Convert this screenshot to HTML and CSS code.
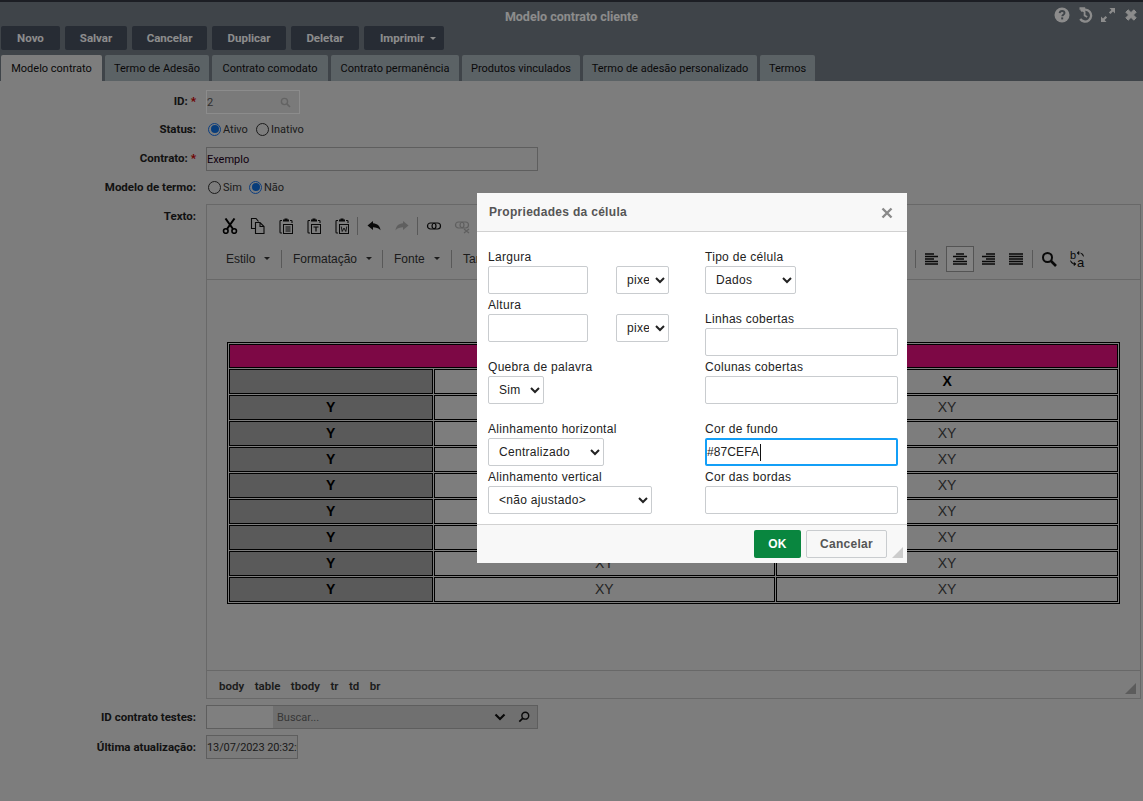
FILE: index.html
```html
<!DOCTYPE html>
<html lang="pt">
<head>
<meta charset="utf-8">
<title>Modelo contrato cliente</title>
<link rel="stylesheet" href="styles.css">
</head>
<body>
<div class="page">
  <header class="head">
    <div class="title-bar">
      <span class="title">Modelo contrato cliente</span>
      <div class="win-icons">
        <svg viewBox="0 0 16 16" class="wi"><circle cx="8" cy="8" r="7.5" fill="currentColor"/><path d="M5.600 6.200c.2-1.500 1.200-2.200 2.500-2.200 1.400 0 2.400.8 2.400 2 0 1.700-2.200 1.700-2.200 3.200" fill="none" stroke="#737d85" stroke-width="1.900"/><rect x="7.200" y="10.400" width="2" height="2" fill="#737d85"/></svg>
        <svg viewBox="0 0 16 16" class="wi"><path d="M2.500 1.500H7V5M4 4.200A6 6 0 1 1 3.200 12" fill="none" stroke="currentColor" stroke-width="2.300"/><path d="M7.600 4.600v3.800l2.600 1.600" fill="none" stroke="currentColor" stroke-width="1.800"/></svg>
        <svg viewBox="0 0 16 16" class="wi"><path d="M9.500 1H15v5.500l-2-2-2.500 2.500-1.600-1.600L11.400 3zM6.500 15H1V9.500l2 2 2.500-2.500 1.600 1.600L4.600 13z" fill="currentColor"/></svg>
        <svg viewBox="0 0 16 16" class="wi"><path d="M2.800 5.200 5.200 2.800 8 5.600l2.800-2.800 2.400 2.400L10.400 8l2.800 2.800-2.400 2.400L8 10.400l-2.800 2.800-2.400-2.400L5.600 8z" fill="currentColor" stroke="currentColor"/></svg>
      </div>
    </div>
    <div class="actions">
      <button class="act w-novo">Novo</button>
      <button class="act w-salvar">Salvar</button>
      <button class="act w-cancelar">Cancelar</button>
      <button class="act w-duplicar">Duplicar</button>
      <button class="act w-deletar">Deletar</button>
      <button class="act w-imprimir">Imprimir <i class="caret"></i></button>
    </div>
    <nav class="tabs">
      <span class="tab active t1">Modelo contrato</span>
      <span class="tab t2">Termo de Adesão</span>
      <span class="tab t3">Contrato comodato</span>
      <span class="tab t4">Contrato permanência</span>
      <span class="tab t5">Produtos vinculados</span>
      <span class="tab t6">Termo de adesão personalizado</span>
      <span class="tab t7">Termos</span>
    </nav>
  </header>

  <main class="form">
    <div class="row r-id">
      <label class="lbl">ID: <b class="req">*</b></label>
      <div class="inp inp-id"><span>2</span>
        <svg viewBox="0 0 16 16" class="search-sm"><circle cx="6.500" cy="6.500" r="4.500" fill="none" stroke="currentColor" stroke-width="2"/><path d="m10 10 4.500 4.500" stroke="currentColor" stroke-width="2.400"/></svg>
      </div>
    </div>
    <div class="row r-status">
      <label class="lbl">Status:</label>
      <div class="radios"><i class="radio on"></i><span class="opt-a">Ativo</span><i class="radio"></i><span>Inativo</span></div>
    </div>
    <div class="row r-contrato">
      <label class="lbl">Contrato: <b class="req">*</b></label>
      <div class="inp inp-contrato"><span>Exemplo</span></div>
    </div>
    <div class="row r-termo">
      <label class="lbl">Modelo de termo:</label>
      <div class="radios"><i class="radio"></i><span class="opt-s">Sim</span><i class="radio on"></i><span>Não</span></div>
    </div>
    <div class="row r-texto">
      <label class="lbl lbl-top">Texto:</label>
      <div class="editor">
        <div class="toolbar">
          <div class="tb-row tb-1">
            <svg class="ic" viewBox="0 0 16 16"><path d="M3.500 0.500l7.500 10.500M12.500 0.500 5 11" stroke="#000" stroke-width="2" fill="none"/><circle cx="3.800" cy="13" r="2.300" fill="none" stroke="#000" stroke-width="1.600"/><circle cx="12.200" cy="13" r="2.300" fill="none" stroke="#000" stroke-width="1.600"/></svg>
            <svg class="ic" viewBox="0 0 16 16"><path d="M5.500 10.500h-4v-10h4.500l2.500 3M5.500 4.500h4.500l4 4v7h-8.500zM10 4.500v4h4" fill="none" stroke="#111" stroke-width="1.100"/></svg>
            <svg class="ic" viewBox="0 0 16 16"><path d="M4 2.500H2.800q-.8 0-.8.800v10.900q0 .8.800.8H4M12 2.500h1.200q.8 0 .8.800V5" fill="none" stroke="#111" stroke-width="1.100"/><path d="M5 3.500V1.500h1.500V.5h3v1H11v2z" fill="#111"/><rect x="5.500" y="6.500" width="9" height="9" fill="none" stroke="#111"/><path d="M7.500 9h5M7.500 11h5M7.500 13h5" stroke="#111"/></svg>
            <svg class="ic" viewBox="0 0 16 16"><path d="M4 2.500H2.800q-.8 0-.8.800v10.900q0 .8.800.8H4M12 2.500h1.200q.8 0 .8.800V5" fill="none" stroke="#111" stroke-width="1.100"/><path d="M5 3.500V1.500h1.500V.5h3v1H11v2z" fill="#111"/><rect x="5.500" y="6.500" width="9" height="9" fill="none" stroke="#111"/><path d="M7.500 9h5M10 9v4.500" stroke="#111" stroke-width="1.200"/></svg>
            <svg class="ic" viewBox="0 0 16 16"><path d="M4 2.500H2.800q-.8 0-.8.800v10.900q0 .8.800.8H4M12 2.500h1.200q.8 0 .8.800V5" fill="none" stroke="#111" stroke-width="1.100"/><path d="M5 3.500V1.500h1.500V.5h3v1H11v2z" fill="#111"/><rect x="5.500" y="6.500" width="9" height="9" fill="none" stroke="#111"/><path d="M7.200 8.500l1 5 1.800-3.500 1.800 3.500 1-5" stroke="#111" stroke-width=".9" fill="none"/></svg>
            <i class="sep"></i>
            <svg class="ic" viewBox="0 0 16 16"><path d="M7 3 1.500 7.500 7 12V9.200c3 0 5.500.7 7.500 3-.5-4-3-6.700-7.500-7z" fill="#111"/></svg>
            <svg class="ic dim" viewBox="0 0 16 16"><path d="M9 3l5.500 4.500L9 12V9.200c-3 0-5.500.7-7.500 3 .5-4 3-6.700 7.500-7z" fill="#111"/></svg>
            <i class="sep"></i>
            <svg class="ic" viewBox="0 0 16 16"><rect x="1.500" y="5" width="8.500" height="6" rx="3" fill="none" stroke="#111" stroke-width="1.200"/><rect x="6" y="5" width="8.500" height="6" rx="3" fill="none" stroke="#111" stroke-width="1.200"/></svg>
            <svg class="ic dim" viewBox="0 0 16 16"><rect x="1.500" y="4" width="8.500" height="6" rx="3" fill="none" stroke="#111" stroke-width="1.200"/><rect x="6" y="4" width="8.500" height="6" rx="3" fill="none" stroke="#111" stroke-width="1.200"/><path d="m10 11 5 4m0-4-5 4" stroke="#111" stroke-width="1.300"/></svg>
          </div>
          <div class="tb-row tb-2">
            <span class="combo c-estilo">Estilo<i class="mini-caret"></i></span><i class="sep"></i>
            <span class="combo c-format">Formatação<i class="mini-caret"></i></span><i class="sep"></i>
            <span class="combo c-fonte">Fonte<i class="mini-caret"></i></span><i class="sep"></i>
            <span class="combo c-tam">Tamanho<i class="mini-caret"></i></span>
            <i class="sep sep-right"></i>
            <svg class="ic al al-first" viewBox="0 0 14 12"><path d="M0 1h9M0 3.500h13M0 6h9M0 8.500h13M0 11h13" stroke="#111" stroke-width="1.300"/></svg>
            <span class="al-active"><svg class="ic al" viewBox="0 0 14 12"><path d="M3 1h8M0 3.500h14M3 6h8M0 8.500h14M0 11h14" stroke="#111" stroke-width="1.300"/></svg></span>
            <svg class="ic al" viewBox="0 0 14 12"><path d="M5 1h9M1 3.500h13M5 6h9M1 8.500h13M1 11h13" stroke="#111" stroke-width="1.300"/></svg>
            <svg class="ic al al-last" viewBox="0 0 14 12"><path d="M0 1h14M0 3.500h14M0 6h14M0 8.500h14M0 11h14" stroke="#111" stroke-width="1.300"/></svg>
            <i class="sep sep-find"></i>
            <svg class="ic ic-find" viewBox="0 0 16 16"><circle cx="6.500" cy="6.500" r="4.500" fill="none" stroke="#111" stroke-width="2"/><path d="m10 10 5 5" stroke="#111" stroke-width="2.600"/></svg>
            <svg class="ic ic-rep" viewBox="0 0 18 18"><text x="1" y="9" class="rep-b">b</text><text x="8" y="17" class="rep-a">a</text><path d="M14.500 6.500q0-3-3-3.500M8 3l2-1.500V4.500zM1.500 10.500q.3 3 3.500 3.500M7 14l-2-1.500v3z" fill="#111" stroke="#111" stroke-width=".7"/></svg>
          </div>
        </div>
        <div class="content">
          <table class="sheet">
            <colgroup><col class="col-y"><col><col></colgroup>
            <tr class="tr-top"><td colspan="3" class="magenta">&nbsp;</td></tr>
            <tr><td class="gray">&nbsp;</td><td class="b">X</td><td class="b">X</td></tr>
            <tr><td class="gray b">Y</td><td>XY</td><td>XY</td></tr>
            <tr><td class="gray b">Y</td><td>XY</td><td>XY</td></tr>
            <tr><td class="gray b">Y</td><td>XY</td><td>XY</td></tr>
            <tr><td class="gray b">Y</td><td>XY</td><td>XY</td></tr>
            <tr><td class="gray b">Y</td><td>XY</td><td>XY</td></tr>
            <tr><td class="gray b">Y</td><td>XY</td><td>XY</td></tr>
            <tr><td class="gray b">Y</td><td>XY</td><td>XY</td></tr>
            <tr><td class="gray b">Y</td><td>XY</td><td>XY</td></tr>
          </table>
        </div>
        <div class="path">
          <span>body</span><span>table</span><span>tbody</span><span>tr</span><span>td</span><span>br</span>
          <i class="grip"></i>
        </div>
      </div>
    </div>
    <div class="row r-test">
      <label class="lbl">ID contrato testes:</label>
      <div class="inp inp-test">
        <span class="test-id"></span>
        <span class="test-ph">Buscar...</span>
        <svg viewBox="0 0 12 12" class="chev"><path d="M1.500 3.500 6 8l4.500-4.500" fill="none" stroke="currentColor" stroke-width="2.200"/></svg>
        <svg viewBox="0 0 14 14" class="lens"><circle cx="8.500" cy="5.500" r="4" fill="none" stroke="currentColor" stroke-width="1.700"/><path d="M5.500 8.500 1.500 12.500" stroke="currentColor" stroke-width="2"/></svg>
      </div>
    </div>
    <div class="row r-update">
      <label class="lbl">Última atualização:</label>
      <div class="inp inp-date"><span>13/07/2023 20:32:05</span></div>
    </div>
  </main>
</div>

<div class="overlay"></div>

<section class="dialog">
  <div class="dlg-head">
    <span class="dlg-title">Propriedades da célula</span>
    <svg viewBox="0 0 12 12" class="dlg-x"><path d="M1.500 1.500l9 9m0-9-9 9" stroke="currentColor" stroke-width="2.400"/></svg>
  </div>
  <div class="dlg-body">
    <div class="col col-l">
      <div class="field"><label>Largura</label>
        <div class="pair"><input class="ctl w100"><select class="ctl w53"><option>pixels</option></select></div>
      </div>
      <div class="field"><label>Altura</label>
        <div class="pair"><input class="ctl w100"><select class="ctl w53"><option>pixels</option></select></div>
      </div>
      <div class="field gap"><label>Quebra de palavra</label>
        <select class="ctl w56"><option>Sim</option></select>
      </div>
      <div class="field gap"><label>Alinhamento horizontal</label>
        <select class="ctl w116"><option>Centralizado</option></select>
      </div>
      <div class="field"><label>Alinhamento vertical</label>
        <select class="ctl w164"><option>&lt;não ajustado&gt;</option></select>
      </div>
    </div>
    <div class="col col-r">
      <div class="field"><label>Tipo de célula</label>
        <select class="ctl w91"><option>Dados</option></select>
      </div>
      <div class="field gap"><label>Linhas cobertas</label><input class="ctl wfull"></div>
      <div class="field"><label>Colunas cobertas</label><input class="ctl wfull"></div>
      <div class="field gap"><label>Cor de fundo</label><div class="ctl wfull focus">#87CEFA<i class="cursor"></i></div></div>
      <div class="field"><label>Cor das bordas</label><input class="ctl wfull"></div>
    </div>
  </div>
  <div class="dlg-foot">
    <button class="btn-ok">OK</button>
    <button class="btn-cancel">Cancelar</button>
    <i class="dlg-grip"></i>
  </div>
</section>
</body>
</html>
```

FILE: styles.css
```css
* { box-sizing: border-box; }
html, body { margin: 0; height: 100%; }
body { position: relative; width: 1143px; height: 801px; overflow: hidden; background: #e3e3e3; font-family: Roboto, "Liberation Sans", sans-serif; font-size: 11px; color: #111; }

.page { display: flex; flex-direction: column; height: 801px; }
.head { background: #737d85; border-top: 2px solid #333842; height: 81px; flex: none; position: relative; }
.title-bar { height: 24px; display: flex; justify-content: center; align-items: center; position: relative; padding-top: 5px; }
.title { font-weight: 700; font-size: 12.500px; color: #fff; }
.win-icons { position: absolute; right: 4px; top: 5px; display: flex; gap: 7px; color: #fff; }
.wi { width: 16px; height: 16px; display: block; }

.actions { display: flex; gap: 5px; padding-left: 1px; }
.act { height: 24px; border: 0; border-radius: 2px; background: #475060; color: #fff; font: 700 11.500px Roboto, sans-serif; padding: 0; }
.w-novo { width: 59px; } .w-salvar { width: 62px; } .w-cancelar { width: 75px; } .w-duplicar { width: 74px; } .w-deletar { width: 68px; } .w-imprimir { width: 80px; padding-left: 8px; }
.caret { display: inline-block; border: 3.500px solid transparent; border-top-color: #fff; border-bottom: 0; vertical-align: 2px; margin-left: 3px; }

.tabs { display: flex; position: absolute; left: 1px; top: 53px; height: 26px; }
.tab { height: 26px; background: #a7b2b9; color: #111; border-radius: 2px 2px 0 0; display: flex; align-items: center; justify-content: center; font-size: 11px; margin-right: 3px; }
.tab.active { background: #e3e3e3; }
.t1 { width: 101px; } .t2 { width: 104px; } .t3 { width: 116px; } .t4 { width: 128px; } .t5 { width: 118px; } .t6 { width: 174px; } .t7 { width: 55px; margin: 0; }

.form { flex: 1; display: flex; flex-direction: column; padding-top: 9px; }
.row { display: grid; grid-template-columns: 196px 1fr; column-gap: 10px; align-items: center; }
.lbl { text-align: right; font-weight: 700; font-size: 11.500px; color: #222; }
.r-id .lbl, .r-contrato .lbl { position: relative; top: -1px; }
.lbl-top { align-self: start; padding-top: 5px; }
.req { color: #c00; }
.inp { height: 24px; border: 1px solid #ababab; background: #e3e3e3; display: flex; align-items: center; font-size: 11px; color: #333; padding-left: 0; position: relative; }
.inp-id { width: 94px; color: #555; background: #dedede; border-color: #fff; }
.search-sm { position: absolute; right: 8px; top: 6px; width: 11px; height: 11px; color: #b5b5b5; }
.r-id { height: 23px; margin-bottom: 4px; }
.r-status { height: 24px; margin-bottom: 6px; }
.r-contrato { height: 24px; margin-bottom: 4px; }
.inp-contrato { width: 332px; }
.inp-contrato span { color: #200020; }
.r-termo { height: 24px; margin-bottom: 5px; }
.radios { display: flex; align-items: center; padding-left: 2px; font-size: 11px; color: #333; }
.radio { width: 13px; height: 13px; border: 1px solid #333; border-radius: 50%; background: #e3e3e3; margin-right: 2px; position: relative; display: block; }
.radio.on { border-color: #1a73e8; }
.radio.on::after { content: ""; position: absolute; inset: 1.500px; background: #0f6fe0; border-radius: 50%; }
.opt-a { width: 33px; }
.opt-s { width: 26px; }

.r-texto { align-items: start; margin-bottom: 6px; height: 495px; }
.editor { width: 935px; height: 495px; border: 1px solid #bdbdbd; display: flex; flex-direction: column; background: #e3e3e3; }
.toolbar { height: 75px; flex: none; border-bottom: 1px solid #bdbdbd; padding: 7px 0 0 15px; }
.tb-row { display: flex; align-items: center; }
.tb-1 { height: 28px; }
.tb-1 .ic { margin-right: 12px; }
.tb-1 .sep { margin: 0 8px 0 -5px; }
.tb-2 { height: 33px; margin-top: 2px; margin-left: 4px; font-family: "Liberation Sans", sans-serif; font-size: 12px; color: #333; }
.ic { width: 16px; height: 16px; display: block; flex: none; }
.dim { opacity: .25; }
.sep { display: block; width: 1px; height: 18px; background: #a3a3a3; flex: none; }
.combo { display: flex; align-items: center; flex: none; }
.mini-caret { display: block; border: 3px solid transparent; border-top-color: #333; border-bottom: 0; margin-left: 9px; }
.c-estilo { width: 55px; }
.c-format { padding-left: 11px; width: 100px; }
.c-fonte { padding-left: 11px; width: 68px; }
.c-tam { padding-left: 11px; width: 100px; }
.sep-right { margin-left: 363px; margin-right: 9px; }
.al { width: 14px; height: 12px; margin-right: 14px; }
.al-first { margin-right: 7px; }
.al-last { margin-right: 9px; }
.al-active { display: flex; align-items: center; justify-content: center; width: 28px; height: 26px; border: 1px solid #9a9a9a; margin-right: 7px; background: #eee; }
.al-active .al { margin: 0; }
.ic-find { margin: 0 12px 0 8px; }
.ic-rep { width: 18px; height: 18px; }
.rep-b { font: 11px "Liberation Sans", sans-serif; fill: #111; }
.rep-a { font: 13px "Liberation Sans", sans-serif; fill: #111; }

.content { flex: 1; padding: 62px 20px 0; }
.sheet { width: 893px; table-layout: fixed; border-collapse: separate; border-spacing: 1px; border: 1px solid #000; font: 14px "Liberation Sans", sans-serif; color: #444; }
.col-y { width: 203.500px; }
.sheet td { height: 25px; padding: 0 0 2px; border: 1px solid #000; text-align: center; }
.sheet .tr-top td { height: 24px; }
.magenta { background: #e30f7f; }
.gray { background: #a4a4a4; }
.sheet .b { font-weight: 700; color: #000; }
.path { height: 28px; flex: none; border-top: 1px solid #bdbdbd; display: flex; align-items: center; gap: 10.500px; padding: 2px 0 0 12px; font: 600 11.500px Roboto, sans-serif; color: #333; position: relative; }
.grip { position: absolute; right: 4px; bottom: 4px; border-style: solid; border-width: 0 0 11px 11px; border-color: transparent transparent #a8a8a8 transparent; }

.r-test { height: 24px; margin-bottom: 6px; }
.inp-test { width: 332px; background: #cdcdcd; color: #333; }
.test-id { width: 66px; height: 22px; background: #e8e8e8; flex: none; }
.test-ph { margin-left: 4px; color: #666; flex: 1; }
.chev { width: 12px; height: 12px; margin-right: 12px; color: #111; }
.lens { width: 12px; height: 12px; margin-right: 7px; color: #111; }
.r-update { height: 24px; }
.inp-date { width: 92px; overflow: hidden; white-space: nowrap; background: #dedede; letter-spacing: -.1px; }

.overlay { position: absolute; inset: 0; background: rgba(0,0,0,.45); }

.dialog { position: absolute; left: 477px; top: 193px; width: 430px; height: 370px; background: #fff; display: flex; flex-direction: column; font-family: "Liberation Sans", sans-serif; font-size: 12px; color: #222; }
.dlg-head { height: 39px; flex: none; background: #f8f8f8; border-bottom: 1px solid #d1d1d1; display: flex; align-items: center; justify-content: space-between; padding: 0 14px 0 12px; }
.dlg-title { font-weight: 700; font-size: 12px; color: #555; letter-spacing: .3px; }
.dlg-x { width: 12px; height: 12px; color: #8a8a8a; margin-top: 2px; }
.dlg-body { flex: 1; display: grid; grid-template-columns: 217px 193px; padding: 18px 0 0 11px; }
.col { display: flex; flex-direction: column; gap: 4px; }
.field { display: flex; flex-direction: column; align-items: flex-start; }
.field.gap { margin-top: 14px; }
.field label { height: 16px; line-height: 14px; letter-spacing: .3px; }
.pair { display: flex; gap: 28px; }
.ctl { height: 28px; border: 1px solid #c9cccf; border-radius: 2px; background: #fff; font: 12px "Liberation Sans", sans-serif; letter-spacing: .3px; color: #222; padding: 0 6px; margin: 0; display: block; outline: none; }
.w100 { width: 100px; } .w53 { width: 53px; padding: 0 3px 0 0; text-indent: 6px; } .w56 { width: 56px; } .w116 { width: 116px; } .w164 { width: 164px; } .w91 { width: 91px; } .wfull { width: 193px; }
.focus { border: 2px solid #139ff7; padding: 0; display: flex; align-items: center; line-height: 24px; letter-spacing: .1px; }
.cursor { display: block; width: 1px; height: 17px; background: #111; margin-left: 1px; }
.dlg-foot { height: 39px; flex: none; background: #f8f8f8; border-top: 1px solid #d1d1d1; display: flex; justify-content: flex-end; align-items: center; gap: 5px; padding-right: 20px; position: relative; }
.btn-ok { width: 47px; height: 28px; border: 0; border-radius: 2px; background: #09863f; color: #fff; font: 700 12px "Liberation Sans", sans-serif; letter-spacing: .3px; padding: 0; }
.btn-cancel { width: 81px; height: 28px; border: 1px solid #c9cccf; border-radius: 2px; background: #f8f8f8; color: #555; font: 700 12px "Liberation Sans", sans-serif; letter-spacing: .3px; padding: 0; }
.dlg-grip { position: absolute; right: 4px; bottom: 5px; border-style: solid; border-width: 0 0 11px 11px; border-color: transparent transparent #ccc transparent; }
```
